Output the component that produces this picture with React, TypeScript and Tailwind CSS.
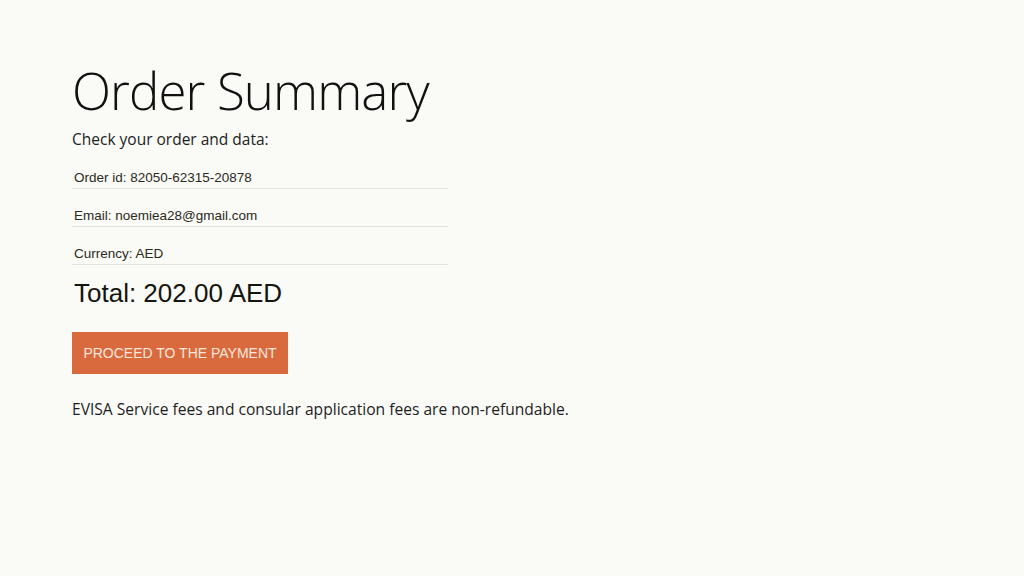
export default function App() {
  const rows = [
    "Order id: 82050-62315-20878",
    "Email: noemiea28@gmail.com",
    "Currency: AED",
  ];

  return (
    <div className="min-h-screen w-full bg-[#fafaf7] text-[#1a1a1a]">
      <div className="pl-[72px] pt-[58px]">
        <h1 className="font-['Open_Sans',sans-serif] text-[51px] font-light leading-[64px] tracking-[-0.9px] text-[#111]">
          Order Summary
        </h1>
        <p className="mt-[6px] font-['Open_Sans',sans-serif] text-[15.5px] leading-[22px] text-[#222]">
          Check your order and data:
        </p>

        <div className="mt-[1px] w-[376px] font-['Liberation_Sans',Arial,sans-serif] text-[13.5px] text-[#2a2a20]">
          {rows.map((r) => (
            <div key={r} className="border-b border-[#e2e2de] pl-[2px] pt-[17px] leading-[20px]">
              {r}
            </div>
          ))}
        </div>

        <div className="mt-[13px] pl-[2px] font-['Liberation_Sans',Arial,sans-serif] text-[26px] leading-[30px] text-[#151510]">
          Total: 202.00 AED
        </div>

        <button className="mt-[24px] h-[42px] w-[216px] bg-[#d96a3e] font-['Liberation_Sans',Arial,sans-serif] text-[14px] uppercase text-[#f8e6dc]">
          Proceed to the payment
        </button>

        <p className="mt-[24px] font-['Open_Sans',sans-serif] text-[15.6px] leading-[22px] text-[#1e1e1e]">
          EVISA Service fees and consular application fees are non-refundable.
        </p>
      </div>
    </div>
  );
}
